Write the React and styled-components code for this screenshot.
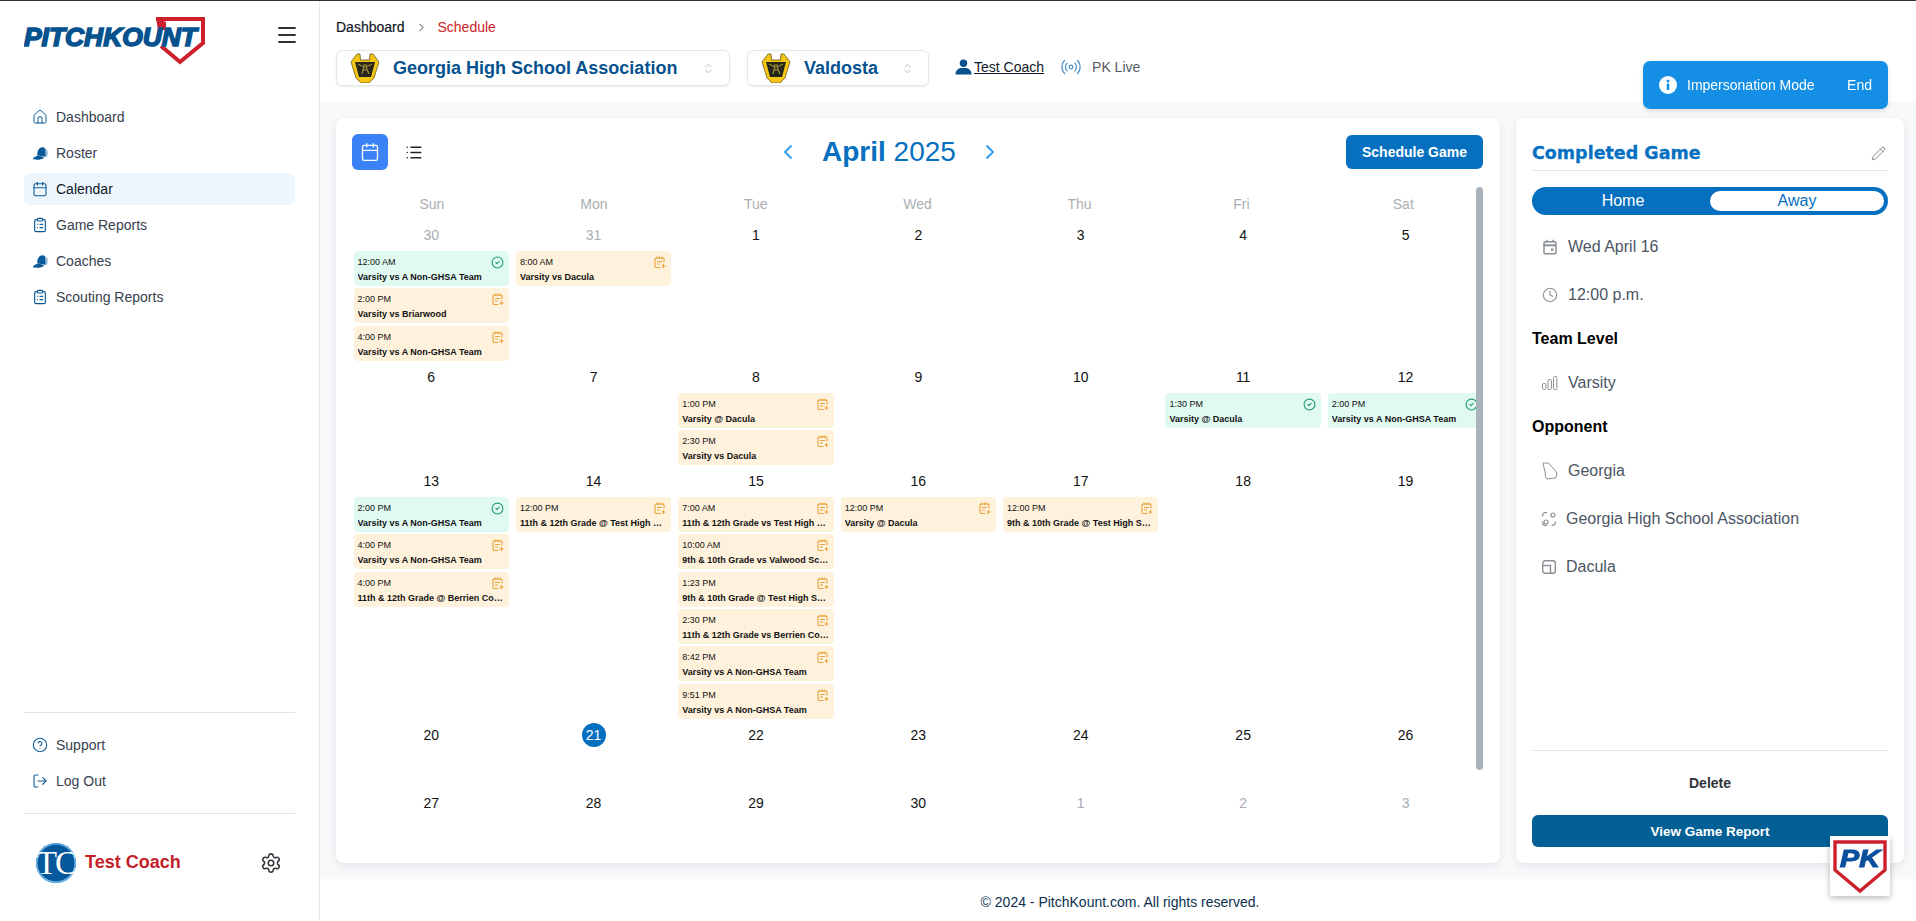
import styled, { createGlobalStyle } from "styled-components"
import {
  Calendar, ChevronLeft, ChevronRight, ChevronsUpDown, CircleCheck, CircleHelp,
  ClipboardList, Clock, House, List, LogOut, Menu, Pencil, Radio, Settings,
} from "lucide-react"

const GlobalStyle = createGlobalStyle`
  html, body { margin: 0; padding: 0; background: #fff; }
  body { font-family: "Liberation Sans", Arial, sans-serif; color: #111827; overflow: hidden; }
  * { box-sizing: border-box; }
`

const Page = styled.div`
  display: flex;
  width: 1916px;
  height: 921px;
  border-top: 1px solid #2f3237;
`

/* sidebar */
const Sidebar = styled.aside`
  display: flex;
  flex-direction: column;
  width: 320px;
  flex: none;
  padding: 0 24px;
  border-right: 1px solid #e5e7eb;
`
const LogoRow = styled.div`
  display: flex;
  align-items: flex-start;
  justify-content: space-between;
  height: 100px;
  padding-top: 15px;
  margin-right: -4px;
`
const MenuButton = styled.span`
  display: flex;
  margin-top: 7px;
  color: #2f3237;
`
const NavList = styled.nav`
  display: flex;
  flex-direction: column;
  gap: 4px;
  flex: 1;
`
const NavItem = styled.a`
  display: flex;
  align-items: center;
  gap: 8px;
  height: 32px;
  padding-left: 8px;
  border-radius: 7px;
  font-size: 14px;
  color: ${p => (p.$active ? "#111827" : "#374151")};
  background: ${p => (p.$active ? "#eef6fd" : "transparent")};
  svg { flex: none; color: #0b5a99; }
`
const SideDivider = styled.div`
  height: 1px;
  background: #e2e4e8;
`
const BottomNav = styled(NavList)`
  flex: none;
  padding: 16px 0;
`
const Profile = styled.div`
  display: flex;
  align-items: center;
  height: 107px;
  padding: 0 13px 10px 12px;
`
const Avatar = styled.div`
  display: flex;
  align-items: center;
  justify-content: center;
  width: 40px;
  height: 40px;
  border-radius: 50%;
  overflow: hidden;
  background: #05589b;
  box-shadow: inset 0 0 0 1.5px #6cb6ea;
  color: #fff;
  font-family: "Liberation Serif", serif;
  font-size: 34px;
  letter-spacing: -2px;
`
const ProfileName = styled.span`
  flex: 1;
  margin-left: 9px;
  font-size: 18px;
  font-weight: 700;
  color: #c4202a;
`
const GearIcon = styled(Settings)`
  color: #33363b;
`

/* header */
const Main = styled.div`
  display: flex;
  flex-direction: column;
  flex: 1;
  min-width: 0;
`
const Header = styled.header`
  height: 101px;
  padding: 18px 16px 0;
`
const Crumbs = styled.div`
  display: flex;
  align-items: center;
  height: 16px;
  font-size: 14px;
  -webkit-text-stroke: 0.2px #111827;
  color: #111827;
  svg { margin: 0 10px 0 10px; color: #222; }
`
const CrumbActive = styled.span`
  color: #cc2229;
  -webkit-text-stroke: 0;
`
const Selects = styled.div`
  display: flex;
  align-items: center;
  margin-top: 15px;
`
const SelectBox = styled.div`
  display: flex;
  align-items: center;
  width: ${p => p.$width}px;
  height: 36px;
  margin-right: 17px;
  padding: 0 14px 0 13px;
  background: #fff;
  border: 1px solid #e5e7eb;
  border-radius: 6px;
  box-shadow: 0 1px 2px rgba(0, 0, 0, 0.08);
  svg.updown { flex: none; color: #9ca3af; }
`
const SelectText = styled.span`
  flex: 1;
  margin-left: 13px;
  font-size: 18px;
  font-weight: 700;
  color: #05528f;
  white-space: nowrap;
`
const UserLink = styled.a`
  display: flex;
  align-items: center;
  gap: 2px;
  margin: -2px 0 0 9px;
  font-size: 14px;
  color: #111827;
  span { text-decoration: underline; }
`
const LiveLink = styled.span`
  display: flex;
  align-items: center;
  gap: 10px;
  margin: -2px 0 0 16px;
  font-size: 14px;
  color: #555b63;
  svg { color: #4d8fc4; }
`
const ImpersonationBox = styled.div`
  position: fixed;
  top: 61px;
  left: 1643px;
  display: flex;
  align-items: center;
  width: 245px;
  height: 48px;
  padding: 0 16px;
  border-radius: 7px;
  background: #148fe5;
  color: #fff;
  font-size: 14px;
  box-shadow: 0 2px 5px rgba(0, 0, 0, 0.12);
`
const ImpersonationLabel = styled.span`
  flex: 1;
  margin-left: 10px;
`

/* content */
const Content = styled.main`
  display: flex;
  gap: 16px;
  height: 777px;
  padding: 16px 12px 16px 16px;
  background: #f8f9fb;
`
const Card = styled.section`
  background: #fff;
  border-radius: 8px;
  box-shadow: 0 3px 8px rgba(30, 41, 59, 0.09);
`
const CalendarCard = styled(Card)`
  display: flex;
  flex-direction: column;
  width: 1164px;
  padding: 16px 17px 0 16px;
`
const CalendarBar = styled.div`
  display: grid;
  grid-template-columns: 424px auto 1fr;
  align-items: center;
  height: 36px;
`
const ViewSwitch = styled.div`
  display: flex;
  align-items: center;
  gap: 17px;
`
const ViewButton = styled.span`
  display: flex;
  align-items: center;
  justify-content: center;
  width: 36px;
  height: 36px;
  border-radius: 6px;
  color: ${p => (p.$active ? "#fff" : "#22262b")};
  background: ${p => (p.$active ? "#3b82f6" : "transparent")};
  &:last-child { width: 18px; }
`
const MonthNav = styled.div`
  display: flex;
  align-items: center;
  gap: 22px;
  color: #2b9cf0;
`
const MonthTitle = styled.h1`
  margin: 0;
  font-size: 28px;
  font-weight: 400;
  color: #0670c0;
  b { font-weight: 700; }
`
const ScheduleButton = styled.button`
  justify-self: end;
  width: 137px;
  height: 34px;
  border: 0;
  border-radius: 6px;
  background: #0670c0;
  color: #fff;
  font-family: inherit;
  font-size: 14px;
  font-weight: 700;
`
const CalendarBody = styled.div`
  position: relative;
  margin: 17px -4px 0 -2px;
  flex: 1;
`
const Thumb = styled.div`
  position: absolute;
  top: 0;
  right: 4px;
  width: 7px;
  height: 583px;
  border-radius: 4px;
  background: #aab2bc;
`
const WeekdayRow = styled.div`
  display: grid;
  grid-template-columns: repeat(7, 161.9px);
  height: 32px;
  padding: 2px 0 0 1px;
  align-items: center;
`
const Weekday = styled.div`
  text-align: center;
  font-size: 14px;
  color: #aaaeb3;
`
const WeekRow = styled.div`
  display: grid;
  grid-template-columns: repeat(7, 162.4px);
  min-height: 68px;
`
const DayCell = styled.div`
  display: flex;
  flex-direction: column;
  gap: 2.33px;
  padding: 0 3.5px;
  min-width: 0;
`
const DateLabel = styled.div`
  display: flex;
  align-items: center;
  justify-content: center;
  height: 29.67px;
  padding-top: 3px;
  font-size: 14px;
  color: ${p => (p.$muted ? "#a9adb2" : "#111")};
`
const TodayMark = styled.span`
  display: flex;
  align-items: center;
  justify-content: center;
  flex: none;
  width: 24px;
  height: 24px;
  border-radius: 50%;
  background: #0670c0;
  color: #fff;
`
const EventCard = styled.div`
  position: relative;
  height: 35px;
  padding: 5px 4px 0;
  border-radius: 4px;
  background: ${p => (p.$done ? "#e0f9f1" : "#fff2dc")};
  color: #111;
  svg { position: absolute; top: 5px; right: 5px; color: ${p => (p.$done ? "#1f9d6e" : "#e8a33a")}; }
`
const EventTime = styled.div`
  height: 13px;
  font-size: 9px;
  line-height: 13px;
`
const EventTitle = styled.div`
  margin-top: 2px;
  font-size: 9px;
  line-height: 12px;
  font-weight: 700;
  white-space: nowrap;
  overflow: hidden;
  text-overflow: ellipsis;
`

/* game panel */
const GamePanel = styled(Card)`
  display: flex;
  flex-direction: column;
  width: 388px;
  padding: 16px;
`
const PanelTitleRow = styled.div`
  display: flex;
  align-items: center;
  justify-content: space-between;
  height: 37px;
  padding: 2px 2px 0 0;
  border-bottom: 1px solid #e5e7eb;
  svg { color: #858a90; }
`
const PanelTitle = styled.h2`
  margin: 0;
  font-family: "DejaVu Sans", sans-serif;
  font-size: 17.5px;
  font-weight: 700;
  -webkit-text-stroke: 0.3px #0670c0;
  color: #0670c0;
`
const Toggle = styled.div`
  display: grid;
  grid-template-columns: 1fr 174px;
  align-items: center;
  height: 28px;
  margin-top: 16px;
  padding: 4px;
  border-radius: 14px;
  background: #0670c0;
`
const ToggleOption = styled.span`
  text-align: center;
  font-size: 16px;
  line-height: 20px;
  border-radius: 10px;
  color: ${p => (p.$active ? "#0670c0" : "#fff")};
  background: ${p => (p.$active ? "#fff" : "transparent")};
`
const InfoRow = styled.div`
  display: flex;
  align-items: center;
  gap: 10px;
  height: 48px;
  padding-left: 10px;
  font-size: 16px;
  color: #4b5563;
  svg { flex: none; color: #8b9096; }
`
const SectionLabel = styled.div`
  height: 40px;
  line-height: 40px;
  font-size: 16px;
  font-weight: 700;
  color: #000;
`
const DetailList = styled.div`
  flex: 1;
  padding-top: 8px;
`
const DeleteRow = styled.div`
  height: 65px;
  padding-top: 24px;
  border-top: 1px solid #e8e9ee;
  text-align: center;
  font-size: 14px;
  font-weight: 700;
  color: #2f3237;
`
const ReportButton = styled.button`
  height: 32px;
  border: 0;
  border-radius: 6px;
  background: #036096;
  color: #fff;
  font-family: inherit;
  font-size: 13.5px;
  font-weight: 700;
`
const PkBadge = styled.div`
  position: fixed;
  left: 1830px;
  top: 836px;
  display: flex;
  width: 60px;
  height: 60px;
  background: #fff;
  box-shadow: 0 2px 6px rgba(0, 0, 0, 0.28);
`
const Footer = styled.footer`
  flex: 1;
  display: flex;
  align-items: center;
  justify-content: center;
  padding: 3px 0 0 4px;
  font-size: 14px;
  color: #0a2f4e;
`

/* drawings that no icon package has */
const PitchKountLogo = () => (
  <svg width="184" height="50" viewBox="0 0 184 50">
    <path d="M132 3 H179 V27 L156 46 L137 30" fill="none" stroke="#cc202c" strokeWidth="4" />
    <path d="M132 2 l2 12 h8 V6 z" fill="#cc202c" />
    <text x="0" y="29.5" fontFamily="Liberation Sans" fontSize="25" fontWeight="700" fontStyle="italic" fill="#05528f" stroke="#05528f" strokeWidth="1.5" textLength="173" lengthAdjust="spacingAndGlyphs">PITCHKOUNT</text>
  </svg>
)

const PkLogo = () => (
  <svg width="60" height="60" viewBox="0 0 60 60">
    <path d="M5 6 H55 V34 L30 55 L5 34 Z" fill="#fff" stroke="#cc202c" strokeWidth="3.4" />
    <text x="30" y="31" textAnchor="middle" fontFamily="Liberation Sans" fontSize="24" fontWeight="700" fontStyle="italic" fill="#0b4f9e" stroke="#0b4f9e" strokeWidth="1.1" textLength="40" lengthAdjust="spacingAndGlyphs">PK</text>
  </svg>
)

const Mascot = () => (
  <svg width="30" height="30" viewBox="0 0 30 30">
    <path d="M1 9 L7 1 L10 1 L10.5 7 L19.5 7 L20 1 L23 1 L29 9 L24 25 L19 30 L11 30 L6 25 Z" fill="#f3c515" stroke="#5a4c10" strokeWidth="0.7" />
    <path d="M5 9 H25 L21 24 H9 Z" fill="#26251b" />
    <path d="M8 11 L14 14 L12 21 M22 11 L16 14 L19 21 M12 17 H18 M14 11 V14 M16 11 V14" fill="none" stroke="#a08c38" strokeWidth="1.2" />
  </svg>
)

const CapIcon = () => (
  <svg width="17" height="15" viewBox="0 0 16 14" style={{ marginRight: -1 }}>
    <path d="M5 9 C4.6 4 7 1 10 1 C12 1 13 2.5 13 5 L13 10 C10 9.4 7.5 9 5 9 Z" fill="#0b5a99" />
    <path d="M12.5 2 C15 3 15.6 7 14 10 L13 10 Z" fill="#9cc0dc" />
    <path d="M0.5 12.5 C2 10.5 3.5 9.5 5.5 9.2 C8 9.2 10 10 11.5 11 C9 12.6 6 13.4 4 12.8 C2.6 12.4 1.5 12.6 0.5 12.5 Z" fill="#0b5a99" />
  </svg>
)

const PendingIcon = () => (
  <svg width="12" height="13" viewBox="0 0 12 13" fill="none" stroke="currentColor" strokeWidth="1.1">
    <path d="M6.5 11.5 H2 a1 1 0 0 1 -1 -1 V3 a1 1 0 0 1 1 -1 H9 a1 1 0 0 1 1 1 V6.5" />
    <path d="M3 .5 V3 M5.5 .5 V3 M8 .5 V3 M3 5.5 H8 M3 8 H6" />
    <path d="M9.5 8 V12 M7.5 10 H11.5" />
  </svg>
)

const UserGlyph = () => (
  <svg width="17" height="16" viewBox="0 0 17 16" fill="#05528f">
    <circle cx="8.5" cy="4.2" r="3.7" />
    <path d="M0.5 15.5 C0.5 11.5 3 9.5 5.5 9 L11.5 9 C14 9.5 16.5 11.5 16.5 15.5 Z" />
  </svg>
)

const InfoGlyph = () => (
  <svg width="18" height="18" viewBox="0 0 18 18">
    <circle cx="9" cy="9" r="9" fill="#fff" />
    <rect x="7.7" y="7.6" width="2.6" height="6.4" fill="#148fe5" />
    <circle cx="9" cy="5" r="1.5" fill="#148fe5" />
  </svg>
)

const DateIcon = () => (
  <svg width="16" height="16" viewBox="0 0 16 16" fill="none" stroke="currentColor" strokeWidth="1.5">
    <rect x="2" y="2.8" width="12" height="12" rx="1.2" />
    <path d="M2 6.3 H14" strokeWidth="2" />
    <path d="M5 .8 V3.5 M11 .8 V3.5" />
    <rect x="9" y="9.5" width="2.4" height="2.4" fill="currentColor" stroke="none" />
  </svg>
)

const LevelIcon = () => (
  <svg width="16" height="14" viewBox="0 0 16 14" fill="none" stroke="currentColor" strokeWidth="1">
    <rect x="0.5" y="7.5" width="3.4" height="6" rx="1" />
    <rect x="6" y="3.5" width="3.4" height="10" rx="1" />
    <rect x="11.5" y="0.5" width="3.4" height="13" rx="1" />
  </svg>
)

const StateIcon = () => (
  <svg width="16" height="18" viewBox="0 0 16 18" fill="none" stroke="currentColor" strokeWidth="1">
    <path d="M1 1 L6.5 1 L9 4 L12 7 L15 11 L13.8 16 L5 17 L3.5 15 L3 9 L1.8 5 Z" />
  </svg>
)

const AssocIcon = () => (
  <svg width="14" height="14" viewBox="0 0 14 14" fill="none" stroke="currentColor" strokeWidth="1.2">
    <path d="M0.7 4.5 V3 A2.3 2.3 0 0 1 3 .7 H5 M.7 9.5 V11 A2.3 2.3 0 0 0 3 13.3 H5 M13.3 9.5 V10.5 A2.8 2.8 0 0 1 10.5 13.3 H9.5" />
    <circle cx="11" cy="3" r="2" />
    <circle cx="4" cy="10" r="2" />
  </svg>
)

const SchoolIcon = () => (
  <svg width="14" height="14" viewBox="0 0 14 14" fill="none" stroke="currentColor" strokeWidth="1.4">
    <rect x="0.7" y="0.7" width="12.6" height="12.6" rx="2.5" />
    <path d="M.7 5.5 H8.5 V13" />
  </svg>
)

const ClipIcon = () => <ClipboardList size={16} strokeWidth={1.7} />

const navItems = [
  { label: "Dashboard", icon: <House size={16} strokeWidth={1.5} /> },
  { label: "Roster", icon: <CapIcon /> },
  { label: "Calendar", icon: <Calendar size={16} strokeWidth={1.6} />, active: true },
  { label: "Game Reports", icon: <ClipIcon /> },
  { label: "Coaches", icon: <CapIcon /> },
  { label: "Scouting Reports", icon: <ClipIcon /> },
]

const NON_GHSA = "Varsity vs A Non-GHSA Team"

const weeks = [
  [
    { date: 30, muted: true, events: [["12:00 AM", NON_GHSA, true], ["2:00 PM", "Varsity vs Briarwood"], ["4:00 PM", NON_GHSA]] },
    { date: 31, muted: true, events: [["8:00 AM", "Varsity vs Dacula"]] },
    { date: 1 }, { date: 2 }, { date: 3 }, { date: 4 }, { date: 5 },
  ],
  [
    { date: 6 }, { date: 7 },
    { date: 8, events: [["1:00 PM", "Varsity @ Dacula"], ["2:30 PM", "Varsity vs Dacula"]] },
    { date: 9 }, { date: 10 },
    { date: 11, events: [["1:30 PM", "Varsity @ Dacula", true]] },
    { date: 12, events: [["2:00 PM", NON_GHSA, true]] },
  ],
  [
    { date: 13, events: [["2:00 PM", NON_GHSA, true], ["4:00 PM", NON_GHSA], ["4:00 PM", "11th & 12th Grade @ Berrien County High School"]] },
    { date: 14, events: [["12:00 PM", "11th & 12th Grade @ Test High School"]] },
    { date: 15, events: [
      ["7:00 AM", "11th & 12th Grade vs Test High School"],
      ["10:00 AM", "9th & 10th Grade vs Valwood School"],
      ["1:23 PM", "9th & 10th Grade @ Test High School"],
      ["2:30 PM", "11th & 12th Grade vs Berrien County High School"],
      ["8:42 PM", NON_GHSA],
      ["9:51 PM", NON_GHSA],
    ] },
    { date: 16, events: [["12:00 PM", "Varsity @ Dacula"]] },
    { date: 17, events: [["12:00 PM", "9th & 10th Grade @ Test High School"]] },
    { date: 18 }, { date: 19 },
  ],
  [
    { date: 20 }, { date: 21, today: true }, { date: 22 }, { date: 23 }, { date: 24 }, { date: 25 }, { date: 26 },
  ],
  [
    { date: 27 }, { date: 28 }, { date: 29 }, { date: 30 },
    { date: 1, muted: true }, { date: 2, muted: true }, { date: 3, muted: true },
  ],
]

const App = () => (
  <Page>
    <GlobalStyle />
    <Sidebar>
      <LogoRow>
        <PitchKountLogo />
        <MenuButton><Menu size={24} strokeWidth={1.8} /></MenuButton>
      </LogoRow>
      <NavList>
        {navItems.map(item => (
          <NavItem key={item.label} $active={item.active}>{item.icon}{item.label}</NavItem>
        ))}
      </NavList>
      <SideDivider />
      <BottomNav>
        <NavItem><CircleHelp size={16} strokeWidth={1.6} />Support</NavItem>
        <NavItem><LogOut size={16} strokeWidth={1.6} />Log Out</NavItem>
      </BottomNav>
      <SideDivider />
      <Profile>
        <Avatar>TC</Avatar>
        <ProfileName>Test Coach</ProfileName>
        <GearIcon size={22} strokeWidth={1.7} />
      </Profile>
    </Sidebar>

    <Main>
      <Header>
        <Crumbs>
          Dashboard
          <ChevronRight size={13} strokeWidth={1.5} />
          <CrumbActive>Schedule</CrumbActive>
        </Crumbs>
        <Selects>
          <SelectBox $width={394}>
            <Mascot />
            <SelectText>Georgia High School Association</SelectText>
            <ChevronsUpDown className="updown" size={13} strokeWidth={1.4} />
          </SelectBox>
          <SelectBox $width={182}>
            <Mascot />
            <SelectText>Valdosta</SelectText>
            <ChevronsUpDown className="updown" size={13} strokeWidth={1.4} />
          </SelectBox>
          <UserLink><UserGlyph /><span>Test Coach</span></UserLink>
          <LiveLink><Radio size={22} strokeWidth={1.4} />PK Live</LiveLink>
        </Selects>
      </Header>

      <ImpersonationBox>
        <InfoGlyph />
        <ImpersonationLabel>Impersonation Mode</ImpersonationLabel>
        End
      </ImpersonationBox>

      <Content>
        <CalendarCard>
          <CalendarBar>
            <ViewSwitch>
              <ViewButton $active><Calendar size={20} strokeWidth={1.6} /></ViewButton>
              <ViewButton><List size={19} strokeWidth={2} /></ViewButton>
            </ViewSwitch>
            <MonthNav>
              <ChevronLeft size={24} strokeWidth={1.8} />
              <MonthTitle><b>April</b> 2025</MonthTitle>
              <ChevronRight size={24} strokeWidth={1.8} />
            </MonthNav>
            <ScheduleButton>Schedule Game</ScheduleButton>
          </CalendarBar>
          <CalendarBody>
            <WeekdayRow>
              {["Sun", "Mon", "Tue", "Wed", "Thu", "Fri", "Sat"].map(day => (
                <Weekday key={day}>{day}</Weekday>
              ))}
            </WeekdayRow>
            {weeks.map((week, i) => (
              <WeekRow key={i}>
                {week.map(day => (
                  <DayCell key={day.date}>
                    <DateLabel $muted={day.muted}>
                      {day.today ? <TodayMark>{day.date}</TodayMark> : day.date}
                    </DateLabel>
                    {(day.events || []).map(([time, title, done], n) => (
                      <EventCard key={n} $done={done}>
                        <EventTime>{time}</EventTime>
                        <EventTitle>{title}</EventTitle>
                        {done ? <CircleCheck size={13} strokeWidth={2} /> : <PendingIcon />}
                      </EventCard>
                    ))}
                  </DayCell>
                ))}
              </WeekRow>
            ))}
            <Thumb />
          </CalendarBody>
        </CalendarCard>

        <GamePanel>
          <PanelTitleRow>
            <PanelTitle>Completed Game</PanelTitle>
            <Pencil size={15} strokeWidth={1.6} />
          </PanelTitleRow>
          <Toggle>
            <ToggleOption>Home</ToggleOption>
            <ToggleOption $active>Away</ToggleOption>
          </Toggle>
          <DetailList>
            <InfoRow><DateIcon />Wed April 16</InfoRow>
            <InfoRow><Clock size={16} strokeWidth={1.6} />12:00 p.m.</InfoRow>
            <SectionLabel>Team Level</SectionLabel>
            <InfoRow><LevelIcon />Varsity</InfoRow>
            <SectionLabel>Opponent</SectionLabel>
            <InfoRow><StateIcon />Georgia</InfoRow>
            <InfoRow><AssocIcon />Georgia High School Association</InfoRow>
            <InfoRow><SchoolIcon />Dacula</InfoRow>
          </DetailList>
          <DeleteRow>Delete</DeleteRow>
          <ReportButton>View Game Report</ReportButton>
        </GamePanel>
      </Content>

      <Footer>© 2024 - PitchKount.com. All rights reserved.</Footer>
    </Main>

    <PkBadge><PkLogo /></PkBadge>
  </Page>
)

export default App
